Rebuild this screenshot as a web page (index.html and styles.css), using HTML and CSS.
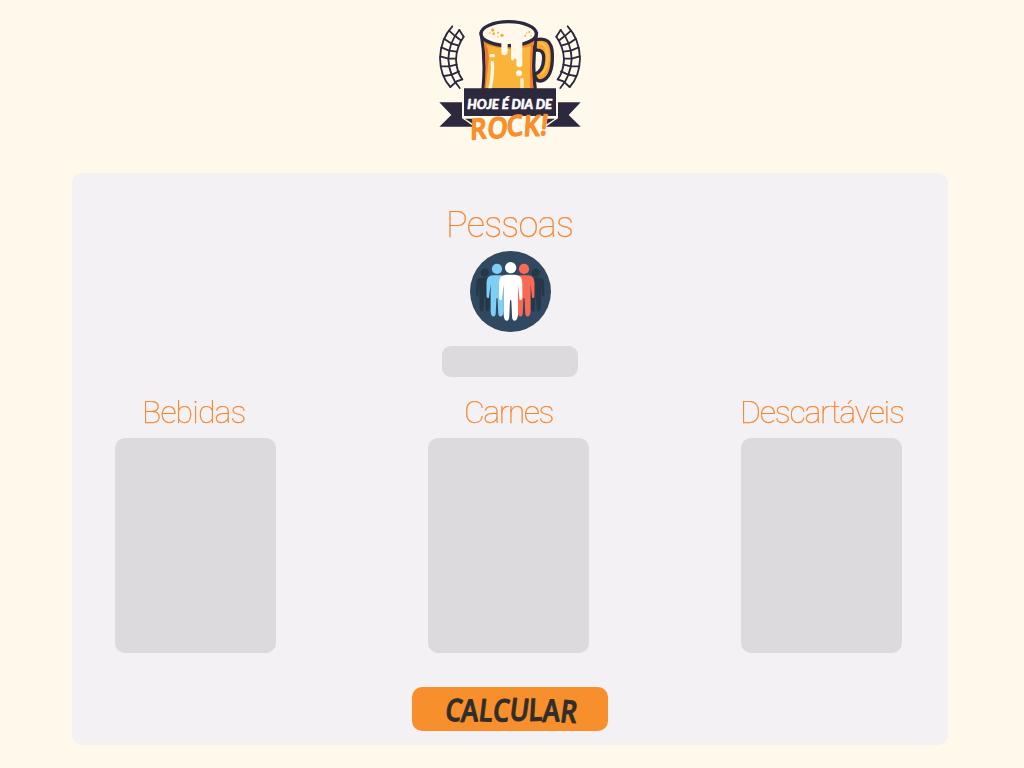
FILE: index.html
```html
<!DOCTYPE html>
<html lang="pt-BR">
<head>
<meta charset="utf-8">
<title>Hoje é dia de Rock!</title>
<link rel="stylesheet" href="styles.css">
</head>
<body>
<header class="header">
<svg class="logo" viewBox="0 0 480 420" role="img" aria-label="Hoje é dia de Rock!">
  <defs>
    <g id="laurel" fill="none" stroke="#2c283d" stroke-width="5.5" stroke-linecap="round">
      <path d="M67 49Q32 86 30 145Q31 199 61 231M88 60Q56 98 55 148Q58 199 89 234M101 80Q79 111 78 149Q80 187 97 208"/>
      <path d="M57 62L73 76L92 91M42 86L63 100L84 106M34 112L57 122L80 125M31 139L55 146L78 146M34 169L57 169L80 164M43 198L66 194L87 184M61 231L80 214L97 208M88 60L101 80"/>
    </g>
  </defs>
  <use href="#laurel"/>
  <use href="#laurel" transform="matrix(-1 0 0 1 480 0)"/>
  <path d="M315 90Q366 76 367 134Q369 205 332 213Q316 214 314 192Q340 185 341 145Q342 116 315 121Z" fill="#f9a633" stroke="#2c283d" stroke-width="10"/>
  <path d="M327 100Q354 98 353 144Q352 178 332 194" fill="none" stroke="#ffc04a" stroke-width="6"/>
  <path d="M154 72Q168 151 159 240H316Q305 158 319 72Z" fill="#fbb43a" stroke="#2c283d" stroke-width="10"/>
  <path d="M161 93Q178 109 176 151L167 236H163Q172 165 161 93M311 96Q299 153 310 236H301Q298 155 303 105Z" fill="#f4782b"/>
  <path d="M161 92Q236 124 313 92L311 105Q241 130 163 103Z" fill="#f08b29"/>
  <path d="M183 137H190M187 157Q190 190 180 236" fill="none" stroke="#fff8e8" stroke-width="10" stroke-linecap="round"/>
  <path d="M276 205V235" stroke="#fff0c7" stroke-width="10"/>
  <ellipse cx="236" cy="71" rx="83" ry="36" fill="#fff8eb" stroke="#2c283d" stroke-width="10"/>
  <path d="M214 80H277V162Q277 172 268 172Q259 172 259 162V150Q259 145 254 145Q248 158 243 146V99Q239 92 233 99V126Q232 136 223 136Q214 136 214 126Z" fill="#fff8eb"/>
  <circle cx="267" cy="190" r="9" fill="#fff8eb"/>
  <g fill="#eeb13b">
    <circle cx="188" cy="60" r="5"/><circle cx="180" cy="69" r="2.5"/><circle cx="191" cy="71" r="4"/><circle cx="204" cy="68" r="3"/><circle cx="216" cy="76" r="5"/><circle cx="204" cy="80" r="2"/><circle cx="298" cy="66" r="3"/><circle cx="286" cy="77" r="3"/><circle cx="303" cy="77" r="2"/><circle cx="290" cy="69" r="2"/>
  </g>
  <path d="M28 277H96V324L132 350H28L64 315ZM452 277H384V324L348 350H452L416 315Z" fill="#2c283d"/>
  <path d="M102 235H378V320H102Z" fill="#2c283d"/>
  <path d="M98 318H382V326L349 340V327H131V340L98 326Z" fill="#fff8eb"/>
  <path d="M105 326H130V343ZM375 326H350V343Z" fill="#2c283d"/>
  <text class="logo-top" x="112" y="297" textLength="254" lengthAdjust="spacingAndGlyphs">HOJE É DIA DE</text>
  <g transform="translate(120 386) rotate(-3) skewX(-5)">
    <text class="logo-rock" x="0" y="0" dy="3 -4 1 0 -1" rotate="-2 5 -3 2 6" textLength="230" lengthAdjust="spacingAndGlyphs">ROCK!</text>
  </g>
</svg>
</header>
<main class="panel">
  <section class="people">
    <h1 class="title title-large">Pessoas</h1>
    <svg class="people-icon" viewBox="0 0 243 243" aria-hidden="true">
      <defs>
        <g id="person">
          <circle cx="0" cy="-67" r="17"/>
          <path d="M-13-46H13Q35-45 35-22V24Q34 32 27 30L22-16V75Q20 92 12 92Q4 92 4 77L2 31H-2L-4 77Q-4 92-12 92Q-20 92-21 75V-16L-27 30Q-34 32-35 24V-22Q-35-45-13-46Z"/>
        </g>
      </defs>
      <circle cx="121.500" cy="121.500" r="121.500" fill="#304860"/>
      <g fill="#263747">
        <use href="#person" transform="translate(44 114) scale(.73)"/>
        <use href="#person" transform="translate(197 114) scale(.73)"/>
      </g>
      <use href="#person" transform="translate(81 114) scale(.9)" fill="#7dcff5"/>
      <use href="#person" transform="translate(162 114) scale(.9)" fill="#f96956"/>
      <use href="#person" transform="translate(122 117)" fill="#fff"/>
    </svg>
    <input class="people-input" type="text" aria-label="Pessoas">
  </section>
  <div class="columns">
    <section class="column"><h2 class="title bebidas">Bebidas</h2><div class="box"></div></section>
    <section class="column"><h2 class="title carnes">Carnes</h2><div class="box"></div></section>
    <section class="column"><h2 class="title descartaveis">Descartáveis</h2><div class="box"></div></section>
  </div>
  <button class="calculate" type="button">
    <svg class="calculate-label" viewBox="0 0 196 44">
      <g transform="translate(32 34) skewX(-5)">
        <text x="0" y="0" dy="-1 2 -1 0 -1 1 1 0" rotate="5 -2 2 2 3 -2 -2 3" textLength="132" lengthAdjust="spacingAndGlyphs">CALCULAR</text>
      </g>
    </svg>
  </button>
</main>
</body>
</html>
```
FILE: styles.css
```css
* { box-sizing: border-box; }
body {
  margin: 0;
  height: 768px;
  overflow: hidden;
  background: #fff9ec;
  font-family: Roboto, "Open Sans", sans-serif;
}
.header {
  width: 1020px;
  height: 173px;
  padding-top: 10px;
  display: flex;
  justify-content: center;
  align-items: flex-start;
}
.logo { width: 160px; height: 140px; }
.logo-top { font: italic 900 37px Lato, sans-serif; fill: #fff; stroke: #fff; stroke-width: 1.5; }
.logo-rock {
  font: 600 86px "Open Sans", sans-serif;
  fill: #f78f2d;
  stroke: #f78f2d;
  stroke-width: 4;
  stroke-linejoin: round;
}
.panel {
  width: 876px;
  height: 572px;
  margin-left: 72px;
  padding: 30px 43px 0;
  border-radius: 10px;
  background: #f3f1f3;
  display: flex;
  flex-direction: column;
  align-items: center;
}
.people { display: flex; flex-direction: column; align-items: center; }
.title {
  margin: 0;
  color: #f3842c;
  font-size: 32px;
  font-weight: 100;
  line-height: 40px;
  white-space: nowrap;
  will-change: transform;
  -webkit-text-stroke: .25px #f3842c;
}
.title-large { font-size: 36px; line-height: 44px; height: 48px; letter-spacing: -.7px; }
.people-icon { width: 81px; height: 81px; }
.people-input {
  width: 136px;
  height: 31px;
  margin: 14px 0 0;
  border: 0;
  border-radius: 9px;
  background: #dcdadc;
}
.columns { width: 787px; margin: 15px auto 0 0; display: flex; justify-content: space-between; }
.column { width: 161px; display: flex; flex-direction: column; align-items: center; }
.title.bebidas, .title.carnes, .title.descartaveis { height: 46px; }
.bebidas { letter-spacing: -.9px; padding-right: 3px; }
.carnes { letter-spacing: -1.5px; }
.descartaveis { letter-spacing: -1.2px; }
.box { width: 161px; height: 215px; border-radius: 10px; background: #dcdadc; }
.calculate {
  width: 196px;
  height: 44px;
  margin-top: 34px;
  padding: 0;
  border: 0;
  border-radius: 10px;
  background: #f78f2c;
}
.calculate-label {
  display: block;
  width: 196px;
  height: 44px;
  font: 600 31px "Open Sans", sans-serif;
  fill: #302d2a;
  stroke: #302d2a;
  stroke-width: 1;
  stroke-linejoin: round;
}
```
